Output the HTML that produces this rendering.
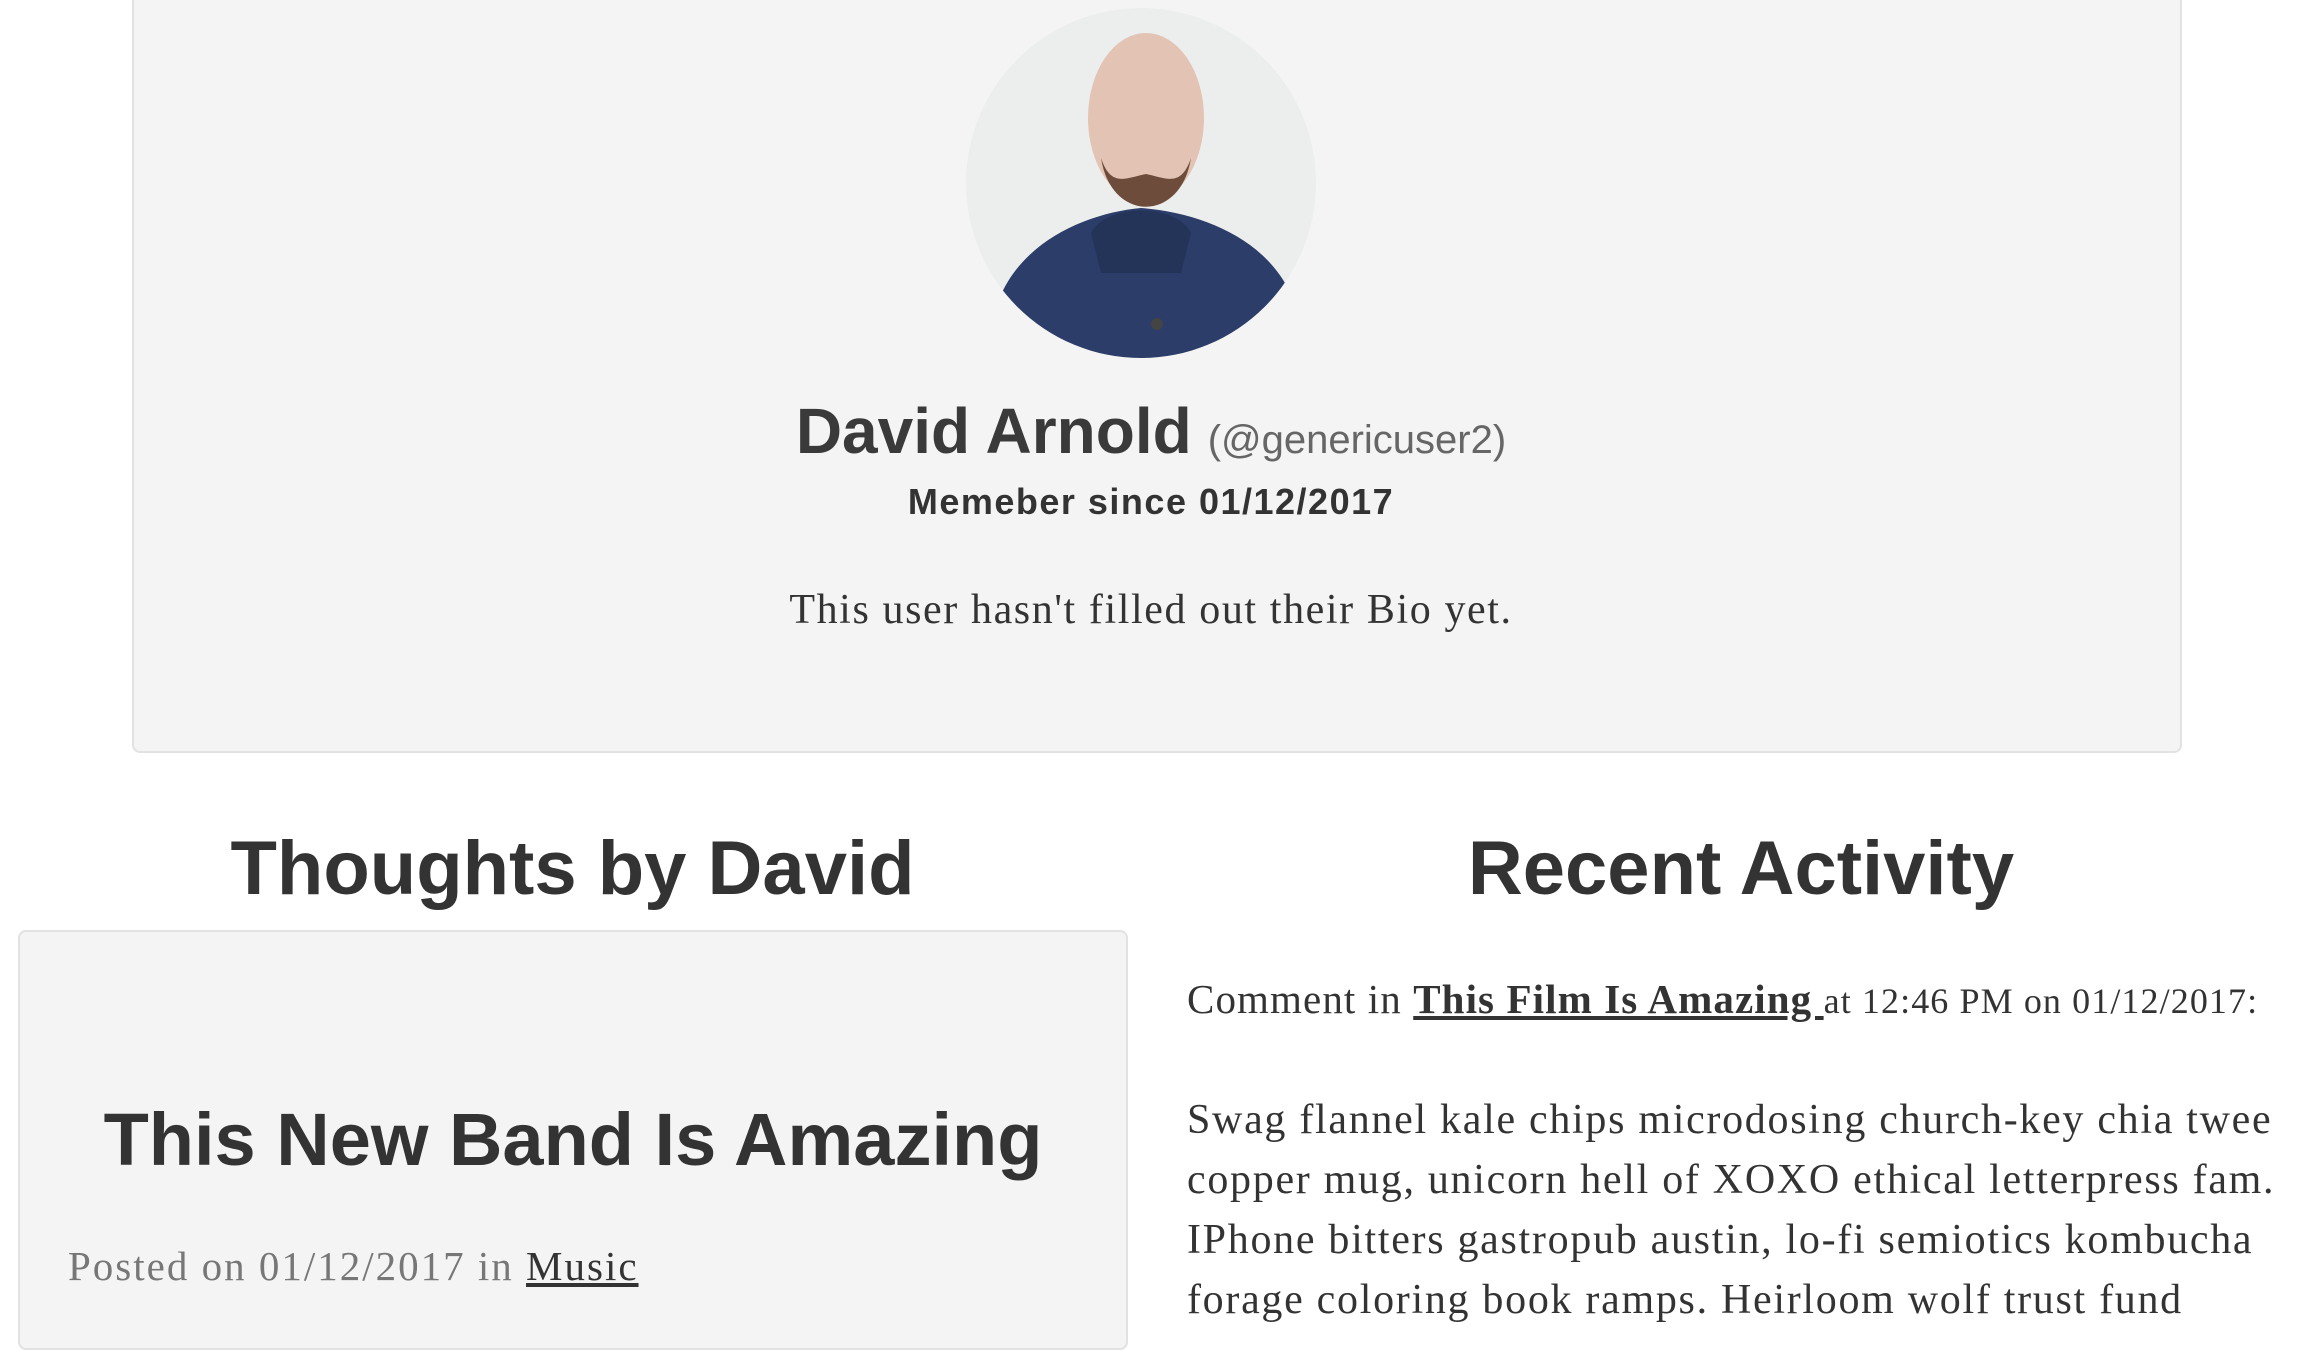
<!DOCTYPE html>
<html><head><meta charset="utf-8"><style>
body{margin:0;width:2302px;height:1318px;background:#fff;overflow:hidden;position:relative;color:#333;}
.abs{position:absolute;white-space:nowrap;}
.sans{font-family:"Liberation Sans",sans-serif;}
.serif{font-family:"Liberation Serif",serif;letter-spacing:1.6px;}
.card{position:absolute;background:#f4f4f4;border:2px solid #e2e2e2;border-radius:8px;box-sizing:border-box;}
a{color:#333;}
</style></head><body>
<div class="card" style="left:132px;top:-10px;width:2050px;height:763px;"></div>
<svg class="abs" style="left:966px;top:8px" width="350" height="350" viewBox="0 0 350 350">
<defs><clipPath id="c"><circle cx="175" cy="175" r="175"/></clipPath></defs>
<g clip-path="url(#c)">
<rect width="350" height="350" fill="#eceeed"/>
<path d="M30 300 C50 235 120 205 175 200 C240 205 310 235 330 300 L350 350 L0 350Z" fill="#2b3d68"/>
<path d="M125 225 C140 195 210 195 225 225 L215 265 L135 265Z" fill="#243459"/>
<ellipse cx="180" cy="110" rx="58" ry="85" fill="#e3c3b3"/>
<path d="M135 150 C145 215 215 215 225 150 C215 180 200 170 180 166 C160 170 145 180 135 150Z" fill="#6e4c3c"/>
<rect x="185" y="310" width="12" height="12" rx="6" fill="#444"/>
</g></svg>
<div class="abs sans" style="left:0;width:2302px;top:394px;text-align:center;font-size:0;">
<span style="font-size:64px;font-weight:bold;color:#3a3a3a;">David Arnold</span><span style="font-size:40px;color:#666;margin-left:16px;">(@genericuser2)</span></div>
<div class="abs sans" style="left:0;width:2302px;top:481px;text-align:center;font-size:36px;font-weight:bold;color:#333;letter-spacing:1.5px;">Memeber since 01/12/2017</div>
<div class="abs serif" style="left:0;width:2302px;top:586px;text-align:center;font-size:42px;color:#333;">This user hasn't filled out their Bio yet.</div>
<div class="abs sans" style="left:0;width:1145px;top:825px;text-align:center;font-size:76px;font-weight:bold;color:#333;">Thoughts by David</div>
<div class="abs sans" style="left:1180px;width:1122px;top:825px;text-align:center;font-size:76px;font-weight:bold;color:#333;">Recent Activity</div>
<div class="card" style="left:18px;top:930px;width:1110px;height:420px;"></div>
<div class="abs sans" style="left:18px;width:1110px;top:1097px;text-align:center;font-size:74px;font-weight:bold;color:#333;">This New Band Is Amazing</div>
<div class="abs serif" style="left:68px;top:1242px;font-size:41px;color:#777;letter-spacing:2px;">Posted on 01/12/2017 in <a href="#" style="color:#333">Music</a></div>
<div class="abs serif" style="left:1187px;top:975px;font-size:41px;color:#333;letter-spacing:1.1px;">Comment in <a href="#" style="font-weight:bold;">This Film Is Amazing </a><span style="font-size:36px">at 12:46 PM on 01/12/2017:</span></div>
<div class="abs serif" style="left:1187px;top:1090px;font-size:42px;line-height:60px;color:#333;letter-spacing:1.7px;">Swag flannel kale chips microdosing church-key chia twee<br>copper mug, unicorn hell of XOXO ethical letterpress fam.<br>IPhone bitters gastropub austin, lo-fi semiotics kombucha<br>forage coloring book ramps. Heirloom wolf trust fund</div>
</body></html>
